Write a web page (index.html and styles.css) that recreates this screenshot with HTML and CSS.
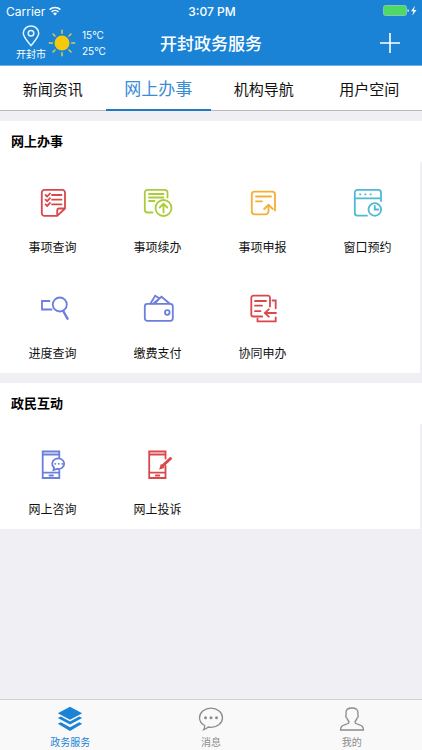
FILE: index.html
```html
<!DOCTYPE html>
<html lang="zh-CN">
<head>
<meta charset="utf-8">
<meta name="viewport" content="width=device-width, initial-scale=1">
<title>开封政务服务</title>
<link rel="stylesheet" href="styles.css">
</head>
<body>
<div class="app">
  <header class="header">
    <div class="status">
      <div class="carrier">
        <span>Carrier</span>
        <svg width="12" height="10" viewBox="0 0 12 10" fill="none" stroke="#fff" stroke-width="1.6"><path d="M.6 3.6a7.8 7.8 0 0 1 10.8 0M2.6 5.8a5 5 0 0 1 6.8 0"/><path d="M6 9.6 4 7.4a3 3 0 0 1 4 0z" fill="#fff" stroke="none"/></svg>
      </div>
      <time class="clock">3:07 PM</time>
      <div class="power">
        <svg width="35" height="12" viewBox="0 0 35 12"><rect x=".5" y=".5" width="23" height="10" rx="2" fill="#4cd964" stroke="#8cc3b4"/><path d="M24.500 4q1.500 0 1.500 1.500t-1.500 1.500z" fill="#d5eadf"/><path d="M32 .8 28 6.300h2.400L29.300 10.500l4.200-5.600h-2.600z" fill="#fff"/></svg>
      </div>
    </div>
    <div class="navbar">
      <div class="weather">
        <button class="city" type="button">
          <svg width="18" height="22" viewBox="0 0 18 22" fill="none" stroke="#e4f6ff" stroke-width="1.500"><path d="M9 20.500C5 15.800 1.300 12 1.300 8.300a7.700 7.300 0 0 1 15.400 0C16.700 12 13 15.800 9 20.500z"/><circle cx="9" cy="8.300" r="2.800"/></svg>
          <span>开封市</span>
        </button>
        <svg class="sun" width="28" height="28" viewBox="0 0 28 28" stroke="#d6cf55" stroke-width="1.500" stroke-linecap="round"><circle cx="14" cy="14" r="7.500" fill="#f5c90c" stroke="none"/><path d="M14 1.300v3M14 23.700v3M1.300 14h3M23.700 14h3M5 5l2 2M21 21l2 2M5 23l2-2M21 7l2-2"/></svg>
        <div class="temps"><span>15°C</span><span>25°C</span></div>
      </div>
      <h1 class="title">开封政务服务</h1>
      <button class="add" type="button" aria-label="添加">
        <svg width="20" height="20" viewBox="0 0 20 20" stroke="#fff" stroke-width="1.600"><path d="M10 0v20M0 10h20"/></svg>
      </button>
    </div>
  </header>

  <nav class="tabs">
    <a class="tab" href="#news">新闻资讯</a>
    <a class="tab tab-active" href="#services" aria-current="page">网上办事</a>
    <a class="tab" href="#agencies">机构导航</a>
    <a class="tab" href="#user">用户空间</a>
  </nav>

  <main class="content">
    <section class="group">
      <h2 class="group-title">网上办事</h2>
      <div class="grid">
        <a class="item red" href="#query">
          <svg class="icon" viewBox="0 0 32 32"><path d="M28 21.500V5.500A2.700 2.700 0 0 0 25.300 2.800H7.500A2.700 2.700 0 0 0 4.800 5.500v20.700a2.700 2.700 0 0 0 2.700 2.700h12.700zM20.200 28.900v-5.400a2 2 0 0 1 2-2H28"/><path d="M8.500 8l1.700 1.500L13 6.500M8.500 12.700l1.700 1.500 2.800-3M8.500 17.400l1.700 1.500 2.800-3M15 8h9.500M15 12.700h9.500M15 17.400h9.500"/></svg>
          <span>事项查询</span>
        </a>
        <a class="item green" href="#renew">
          <svg class="icon" viewBox="0 0 32 32"><path d="M25.500 10.500v-5a2.700 2.700 0 0 0-2.700-2.700H5.500a2.700 2.700 0 0 0-2.700 2.700v17.300a2.700 2.700 0 0 0 2.700 2.700h5M7 7h14.500M7 10.500h14.500M7 14h5.500"/><circle cx="21.500" cy="21" r="8"/><path d="M21.500 25.500v-8.500M17.700 20.500l3.800-3.700 3.800 3.700"/></svg>
          <span>事项续办</span>
        </a>
        <a class="item orange" href="#declare">
          <svg class="icon" viewBox="0 0 32 32"><path d="M28 23.500V7.500a2.800 2.800 0 0 0-2.800-2.800H7.600a2.800 2.800 0 0 0-2.800 2.800v17a2.800 2.800 0 0 0 2.800 2.800h10.500c2.500 0 3.400-1.300 3.400-3.500v-5M17.200 22l4.300-4.300 4.300 4.300M9 9.500h15M9 14.300h6"/></svg>
          <span>事项申报</span>
        </a>
        <a class="item cyan" href="#appointment">
          <svg class="icon" viewBox="0 0 32 32"><path d="M29 14V5.500a2.700 2.700 0 0 0-2.700-2.700H5.500a2.700 2.700 0 0 0-2.700 2.700V26a2.700 2.700 0 0 0 2.700 2.700h9.500M2.800 11.300H29"/><path d="M8 7.300h.5M13.200 7.300h.5M18.400 7.300h.5"/><circle cx="22.800" cy="22.500" r="6.300"/><path d="M22.800 18.800v3.700h3.500"/></svg>
          <span>窗口预约</span>
        </a>
        <a class="item blue" href="#progress">
          <svg class="icon" viewBox="0 0 32 32"><path d="M12.500 8H5v8.500h9.500"/><circle cx="22.800" cy="11.500" r="7"/><path d="M26.200 18l4.300 7.700" stroke-width="2.400"/></svg>
          <span>进度查询</span>
        </a>
        <a class="item blue" href="#payment">
          <svg class="icon" viewBox="0 0 32 32"><rect x="2.800" y="10.800" width="28" height="17" rx="2.500"/><circle cx="25.300" cy="19.500" r="2.300"/><path d="M8.500 10.500l4.700-7.700 4.500 2.700M11.500 10.500l8-6.800 8 6.800M13 10.500l4.500-5" /></svg>
          <span>缴费支付</span>
        </a>
        <a class="item red" href="#joint">
          <svg class="icon" viewBox="0 0 32 32"><path d="M23 13.500V4.700a2 2 0 0 0-2-2H6.300a2 2 0 0 0-2 2v16.800a2 2 0 0 0 2 2h8.900M8 8h11M8 12.700h7M8 18.200h5.500M25.500 7.500h3.200v7.800M10.500 25.700v2.600h18.200v-3.800M29 20h-11M21.800 16.300 17.800 20l4 3.700"/></svg>
          <span>协同申办</span>
        </a>
      </div>
    </section>

    <section class="group">
      <h2 class="group-title">政民互动</h2>
      <div class="grid">
        <a class="item blue" href="#consult">
          <svg class="icon" viewBox="0 0 32 32"><path d="M22.300 8.500V2.500H5.700v26.500h16.600v-7.500M5.700 5.500h16.600M5.700 23.700h16.600M12.500 26.500h3.500"/><path d="M17 18.500a6 5.300 0 1 1 3 1.400l-3.500 1.300z"/><path d="M18.200 14.800h.2M21.700 14.800h.2M25.200 14.800h.2"/></svg>
          <span>网上咨询</span>
        </a>
        <a class="item red" href="#complaint">
          <svg class="icon" viewBox="0 0 32 32"><path d="M23.500 9.500v-7H7.200v26.500h16.300V17M7.200 5.500h16.300M7.200 23.700h16.300M13.800 26.500h3.500"/><path d="M21 16.500 28.500 9.500" stroke-width="3"/><path d="M18.500 19.300l.8-2.800 1.800 1.900z" fill="currentColor"/></svg>
          <span>网上投诉</span>
        </a>
      </div>
    </section>
  </main>

  <nav class="tabbar">
    <a class="bar-item bar-active" href="#home">
      <svg width="26" height="26" viewBox="0 0 26 26" fill="currentColor"><path d="M13 .8 25.200 7.300 13 13.700.8 7.300z"/><path d="M.8 12l3-1.600 9.200 5 9.200-5 3 1.600L13 18.600z"/><path d="M.8 17.800l3-1.600 9.200 5 9.200-5 3 1.600L13 25z"/></svg>
      <span>政务服务</span>
    </a>
    <a class="bar-item" href="#messages">
      <svg width="26" height="26" viewBox="0 0 26 26" fill="none" stroke="currentColor" stroke-width="1.300"><path d="M6.700 19.500C3.400 17.800 1.500 15 1.500 11.800 1.500 6.500 6.600 2.200 13 2.200s11.500 4.300 11.500 9.600S19.400 21.300 13 21.300c-1 0-1.900-.1-2.800-.3-1.200 1.300-2.800 2.100-4.500 2.700.8-1.300 1.100-2.700 1-4.200z"/><g fill="currentColor" stroke="none"><circle cx="7.500" cy="11.800" r="1.500"/><circle cx="13" cy="11.800" r="1.500"/><circle cx="18.500" cy="11.800" r="1.500"/></g></svg>
      <span>消息</span>
    </a>
    <a class="bar-item" href="#mine">
      <svg width="26" height="26" viewBox="0 0 26 26" fill="none" stroke="currentColor" stroke-width="1.300" stroke-linejoin="round"><path d="M13 2c-4 0-6 1.600-6 4.600 0 1 .1 1.500.3 2.300-.9.300-.7 2.700.6 3.100.4 1.700 1.300 2.700 2.100 3.500.2 1.500-.5 2-2 2.500-3.600 1.200-6.300 1.500-6.500 6h23c-.2-4.500-2.900-4.800-6.500-6-1.500-.5-2.200-1-2-2.500.8-.8 1.700-1.800 2.100-3.500 1.300-.4 1.500-2.800.6-3.100.2-.8.300-1.300.3-2.300C19 3.600 17 2 13 2z"/></svg>
      <span>我的</span>
    </a>
  </nav>
</div>
</body>
</html>
```

FILE: styles.css
```css
* {
  box-sizing: border-box;
}

body {
  margin: 0;
  background: #efeff4;
  color: #111;
  font-family: Inter, "Noto Sans CJK SC", sans-serif;
}

a {
  color: inherit;
  text-decoration: none;
}

button {
  padding: 0;
  border: 0;
  background: none;
  color: inherit;
  font: inherit;
  cursor: pointer;
}

svg {
  display: block;
}

.app {
  display: flex;
  flex-direction: column;
  min-height: 100vh;
}

.header {
  background: #1a83d6;
  border-bottom: 1px solid #74b2e4;
  color: #fff;
}

.status,
.navbar {
  display: grid;
  grid-template-columns: 1fr auto 1fr;
  align-items: center;
}

.status {
  height: 22px;
  padding: 0 4px 0 6px;
  font-size: 12px;
}

.carrier {
  display: flex;
  align-items: center;
  gap: 4px;
}

.clock {
  font-weight: 500;
}

.power {
  justify-self: end;
}

.navbar {
  height: 43px;
  padding: 0 16px 2px;
}

.weather {
  display: flex;
  align-items: center;
}

.city {
  display: flex;
  flex-direction: column;
  align-items: center;
  font-size: 10px;
  line-height: 14px;
}

.sun {
  margin-left: 2px;
}

.temps {
  display: flex;
  flex-direction: column;
  margin-left: 6px;
  font-size: 10px;
  line-height: 16px;
}

.title {
  margin: 0;
  font-size: 17px;
  font-weight: 500;
}

.add {
  justify-self: end;
  padding: 0 6px;
}

.tabs {
  display: grid;
  grid-template-columns: repeat(4, 1fr);
  height: 45px;
  background: #fff;
}

.tab {
  display: flex;
  align-items: center;
  justify-content: center;
  border-bottom: 1px solid #bbbbbd;
  font-size: 15px;
}

.tab-active {
  border-bottom: 2px solid #2279c1;
  color: #3a8cd6;
  font-size: 17px;
}

.content {
  flex: 1;
  display: flex;
  flex-direction: column;
  gap: 10px;
  padding: 10px 0;
}

.group-title {
  margin: 0;
  padding: 0 11px;
  background: #fff;
  color: #000;
  font-size: 13px;
  font-weight: 700;
  line-height: 41px;
}

.grid {
  display: grid;
  grid-template-columns: repeat(4, 1fr);
  row-gap: 1px;
  margin-right: 2px;
  background: #fff;
}

.item {
  display: flex;
  flex-direction: column;
  align-items: center;
  gap: 18px;
  padding: 25px 0 8px;
}

.item span {
  color: #111;
  font-size: 12px;
  line-height: 22px;
}

.icon {
  width: 32px;
  height: 32px;
  fill: none;
  stroke: currentColor;
  stroke-width: 1.8px;
  stroke-linecap: round;
}

.red {
  color: #d9484b;
}

.green {
  color: #accb3b;
}

.orange {
  color: #f5ae36;
}

.cyan {
  color: #4fb8d4;
}

.blue {
  color: #6b7fdb;
}

.tabbar {
  display: grid;
  grid-template-columns: repeat(3, 1fr);
  height: 51px;
  border-top: 1px solid #d0d0d5;
  background: #f9f9f9;
}

.bar-item {
  display: flex;
  flex-direction: column;
  align-items: center;
  gap: 3px;
  padding-top: 6px;
  color: #8c8c8c;
  font-size: 10px;
  line-height: 14px;
}

.bar-active {
  color: #1a83d6;
}
```
